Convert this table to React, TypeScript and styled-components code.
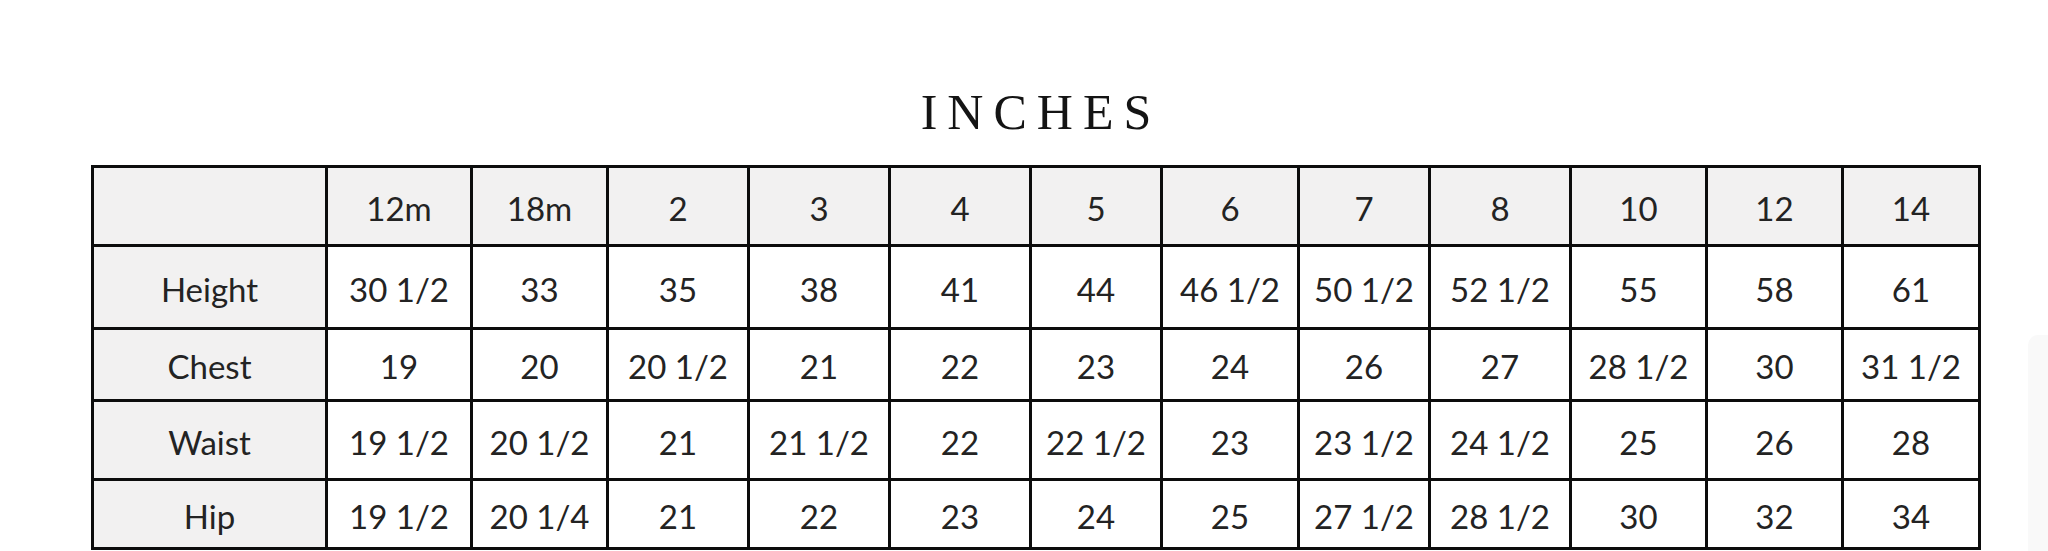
import React from "react";
import styled, { createGlobalStyle } from "styled-components";

const GlobalStyle = createGlobalStyle`
  html, body {
    margin: 0;
    padding: 0;
    background: #ffffff;
  }
  body {
    font-family: "Lato", "Open Sans", sans-serif;
  }
`;

const Page = styled.div`
  position: relative;
  width: 2048px;
  height: 551px;
  overflow: hidden;
  background: #ffffff;
  padding: 87px 0 0 91px;
  box-sizing: border-box;
`;

const Chart = styled.div`
  width: 1890px;
  display: flex;
  flex-direction: column;
  align-items: stretch;
`;

const Title = styled.h1`
  margin: 0 0 28px 0;
  padding-left: 10px;
  font-family: "Liberation Serif", "DejaVu Serif", serif;
  font-weight: 400;
  font-size: 50px;
  line-height: 50px;
  letter-spacing: 10px;
  color: #141414;
  text-align: center;
`;

const Grid = styled.div`
  display: grid;
  grid-template-columns: 231px 142px 133px 138px 138px 138px 128px 134px 128px 138px 133px 133px 134px;
  grid-template-rows: 76px 80px 69px 76px 66px;
  gap: 3px;
  padding: 3px;
  background: #0c0c0c;
`;

const Cell = styled.div<{ $shade?: boolean }>`
  display: flex;
  align-items: center;
  justify-content: center;
  padding-top: 3px;
  box-sizing: border-box;
  background: ${(p) => (p.$shade ? "#f2f1f1" : "#ffffff")};
  font-family: "Lato", "Open Sans", sans-serif;
  font-size: 33px;
  color: #232323;
  white-space: nowrap;
`;

const EdgeShade = styled.div`
  position: absolute;
  right: 0;
  top: 335px;
  width: 20px;
  height: 216px;
  background: #f9f9f9;
  border-top-left-radius: 10px;
`;

const sizes = ["12m", "18m", "2", "3", "4", "5", "6", "7", "8", "10", "12", "14"];

const rows: { label: string; values: string[] }[] = [
  { label: "Height", values: ["30 1/2", "33", "35", "38", "41", "44", "46 1/2", "50 1/2", "52 1/2", "55", "58", "61"] },
  { label: "Chest", values: ["19", "20", "20 1/2", "21", "22", "23", "24", "26", "27", "28 1/2", "30", "31 1/2"] },
  { label: "Waist", values: ["19 1/2", "20 1/2", "21", "21 1/2", "22", "22 1/2", "23", "23 1/2", "24 1/2", "25", "26", "28"] },
  { label: "Hip", values: ["19 1/2", "20 1/4", "21", "22", "23", "24", "25", "27 1/2", "28 1/2", "30", "32", "34"] },
];

export default function App() {
  return (
    <>
      <GlobalStyle />
      <Page>
        <Chart>
          <Title>INCHES</Title>
          <Grid>
            <Cell $shade />
            {sizes.map((s) => (
              <Cell key={`h-${s}`} $shade>
                {s}
              </Cell>
            ))}
            {rows.map((r) => (
              <React.Fragment key={r.label}>
                <Cell $shade>{r.label}</Cell>
                {r.values.map((v, i) => (
                  <Cell key={`${r.label}-${i}`}>{v}</Cell>
                ))}
              </React.Fragment>
            ))}
          </Grid>
        </Chart>
        <EdgeShade />
      </Page>
    </>
  );
}
